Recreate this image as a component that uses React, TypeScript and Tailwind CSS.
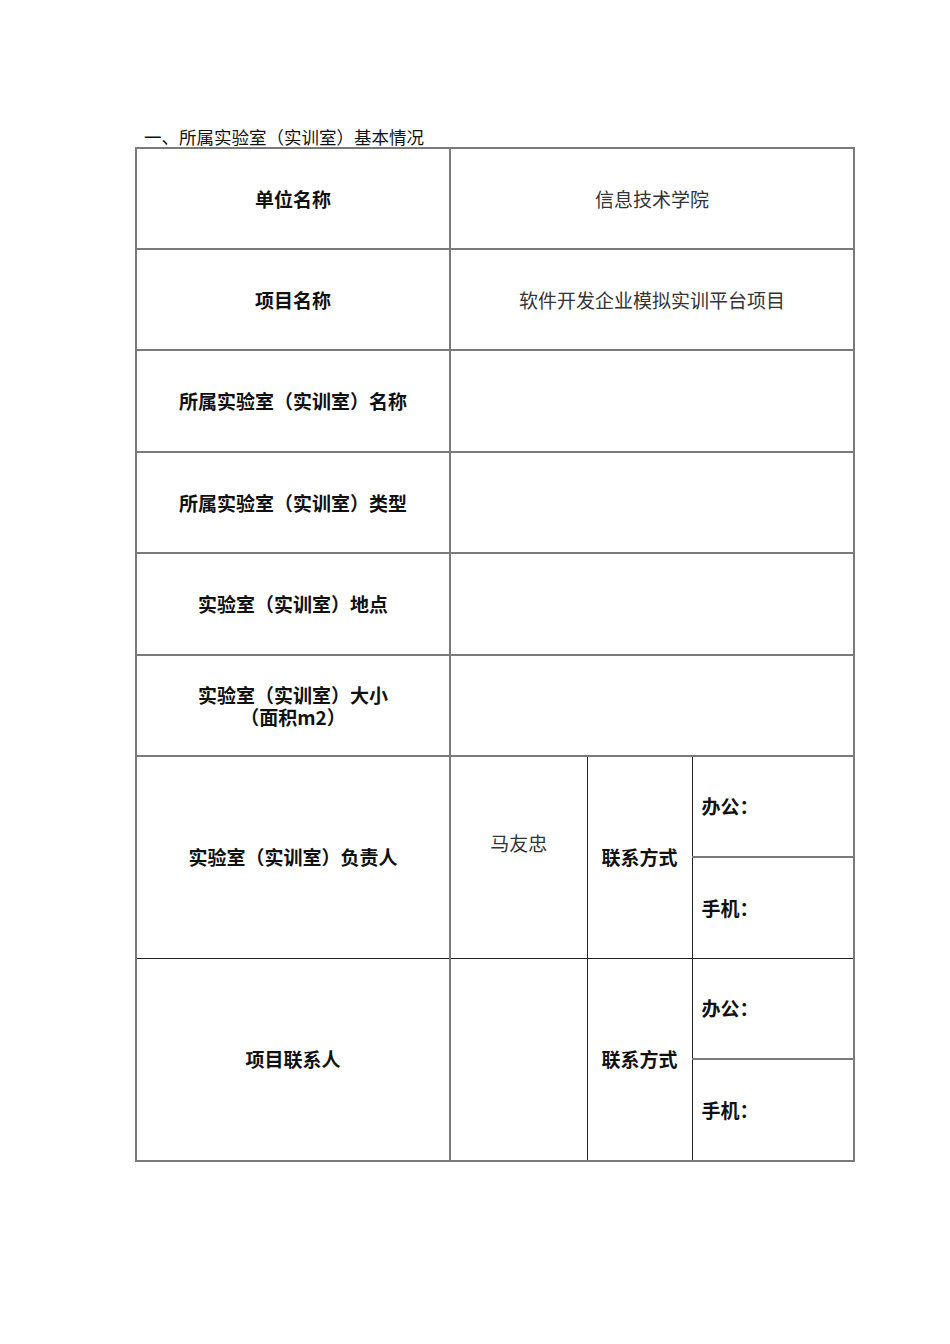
import React from "react";

const font = { fontFamily: '"Noto Sans CJK SC", "Noto Sans", sans-serif' };

export default function App() {
  const L = "border-2 border-[#7a7a7a] text-center align-middle font-bold text-[19px] leading-[22px] text-[#111]";
  const V = "border-2 border-[#7a7a7a] text-center align-middle text-[19px] leading-[22px] text-[#333]";
  const R = "border-2 border-[#7a7a7a] border-l border-l-[#222] text-left align-middle pl-[9px] font-bold text-[19px] text-[#111]";
  return (
    <div className="w-[950px] min-h-[1344px] bg-white" style={font}>
      <div className="pl-[135px] pt-[126px]">
        <div className="pl-[9px] text-[17.5px] leading-[21px] text-[#111]">一、所属实验室（实训室）基本情况</div>
        <table className="table-fixed border-collapse w-[718px]">
          <colgroup>
            <col className="w-[314px]" />
            <col className="w-[137px]" />
            <col className="w-[105px]" />
            <col className="w-[162px]" />
          </colgroup>
          <tbody>
            <tr className="h-[101px]">
              <td className={L}>单位名称</td>
              <td colSpan={3} className={V}>信息技术学院</td>
            </tr>
            <tr className="h-[101px]">
              <td className={L}>项目名称</td>
              <td colSpan={3} className={V}>软件开发企业模拟实训平台项目</td>
            </tr>
            <tr className="h-[102px]">
              <td className={L}>所属实验室（实训室）名称</td>
              <td colSpan={3} className={V}></td>
            </tr>
            <tr className="h-[101px]">
              <td className={L}>所属实验室（实训室）类型</td>
              <td colSpan={3} className={V}></td>
            </tr>
            <tr className="h-[102px]">
              <td className={L}>实验室（实训室）地点</td>
              <td colSpan={3} className={V}></td>
            </tr>
            <tr className="h-[101px]">
              <td className={L}>
                实验室（实训室）大小
                <br />
                （面积m2）
              </td>
              <td colSpan={3} className={V}></td>
            </tr>
            <tr className="h-[101px]">
              <td rowSpan={2} className={L + " border-b border-b-[#222]"}>实验室（实训室）负责人</td>
              <td rowSpan={2} className={V + " pb-[28px] border-b border-b-[#222] border-r border-r-[#222]"}>马友忠</td>
              <td rowSpan={2} className={L + " border-x border-x-[#222] border-b border-b-[#222]"}>联系方式</td>
              <td className={R}>办公：</td>
            </tr>
            <tr className="h-[101px]">
              <td className={R + " border-b border-b-[#222]"}>手机：</td>
            </tr>
            <tr className="h-[101px]">
              <td rowSpan={2} className={L + " border-t border-t-[#222]"}>项目联系人</td>
              <td rowSpan={2} className={V + " border-t border-t-[#222] border-r border-r-[#222]"}></td>
              <td rowSpan={2} className={L + " border-x border-x-[#222] border-t border-t-[#222]"}>联系方式</td>
              <td className={R + " border-t border-t-[#222]"}>办公：</td>
            </tr>
            <tr className="h-[102px]">
              <td className={R}>手机：</td>
            </tr>
          </tbody>
        </table>
      </div>
    </div>
  );
}
